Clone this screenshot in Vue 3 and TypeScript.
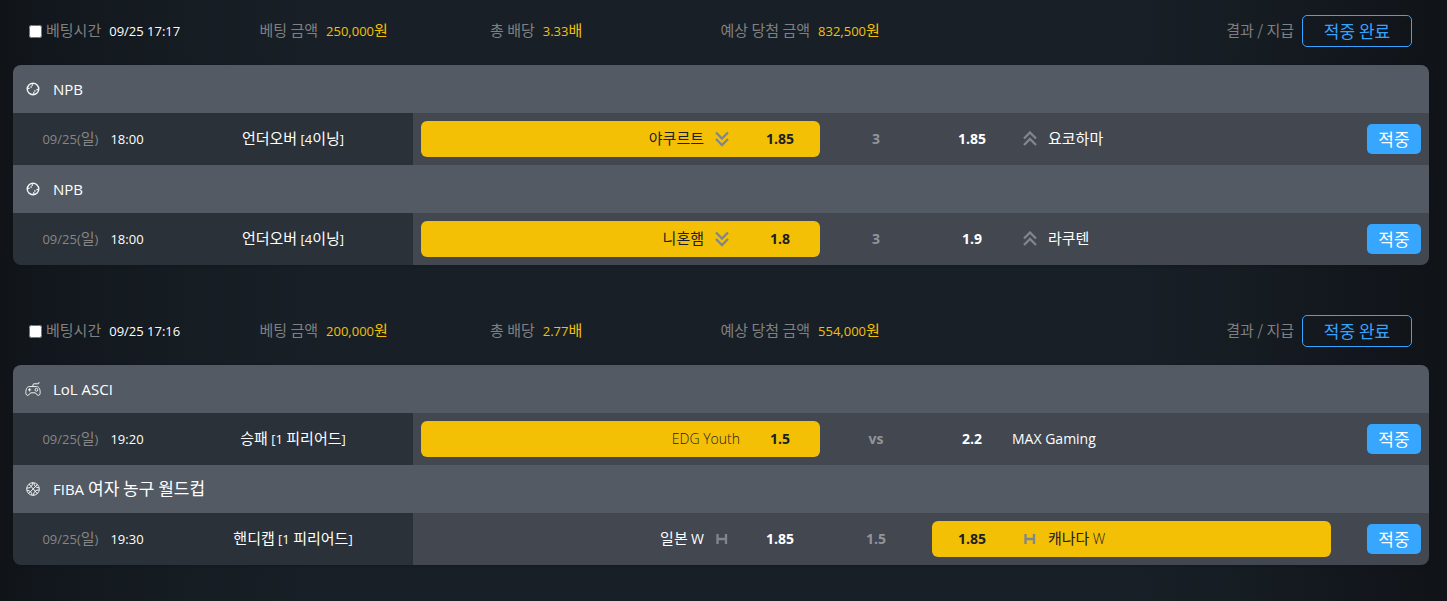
<script setup lang="ts">
import { h, type FunctionalComponent } from 'vue'

type Sport = 'baseball' | 'esports' | 'basketball'
type Mark = 'down' | 'up' | 'handicap'

interface Side {
  name: string
  odds: string
  mark?: Mark
  picked?: boolean
}

interface Match {
  sport: Sport
  league: string
  date: string
  time: string
  market: string
  home: Side
  line: string
  away: Side
  result: string
}

interface Slip {
  id: number
  placedAt: string
  stake: string
  totalOdds: string
  payout: string
  status: string
  matches: Match[]
}

const slips: Slip[] = [
  {
    id: 1,
    placedAt: '09/25 17:17',
    stake: '250,000원',
    totalOdds: '3.33배',
    payout: '832,500원',
    status: '적중 완료',
    matches: [
      {
        sport: 'baseball',
        league: 'NPB',
        date: '09/25(일)',
        time: '18:00',
        market: '언더오버 [4이닝]',
        home: { name: '야쿠르트', odds: '1.85', mark: 'down', picked: true },
        line: '3',
        away: { name: '요코하마', odds: '1.85', mark: 'up' },
        result: '적중',
      },
      {
        sport: 'baseball',
        league: 'NPB',
        date: '09/25(일)',
        time: '18:00',
        market: '언더오버 [4이닝]',
        home: { name: '니혼햄', odds: '1.8', mark: 'down', picked: true },
        line: '3',
        away: { name: '라쿠텐', odds: '1.9', mark: 'up' },
        result: '적중',
      },
    ],
  },
  {
    id: 2,
    placedAt: '09/25 17:16',
    stake: '200,000원',
    totalOdds: '2.77배',
    payout: '554,000원',
    status: '적중 완료',
    matches: [
      {
        sport: 'esports',
        league: 'LoL ASCI',
        date: '09/25(일)',
        time: '19:20',
        market: '승패 [1 피리어드]',
        home: { name: 'EDG Youth', odds: '1.5', picked: true },
        line: 'vs',
        away: { name: 'MAX Gaming', odds: '2.2' },
        result: '적중',
      },
      {
        sport: 'basketball',
        league: 'FIBA 여자 농구 월드컵',
        date: '09/25(일)',
        time: '19:30',
        market: '핸디캡 [1 피리어드]',
        home: { name: '일본 W', odds: '1.85', mark: 'handicap' },
        line: '1.5',
        away: { name: '캐나다 W', odds: '1.85', mark: 'handicap', picked: true },
        result: '적중',
      },
    ],
  },
]

// Hangul is set slightly larger than the Latin letters and digits beside it.
const Mixed: FunctionalComponent<{ text: string }> = (props) => {
  const runs = props.text.match(/[가-힣]+(?:(?: \/)? [가-힣]+)* ?|[^가-힣]+/g) ?? []
  return h(
    'span',
    { class: 'mixed' },
    runs.map((run) => (/[가-힣]/.test(run) ? h('span', { class: 'ko' }, run) : run)),
  )
}
Mixed.props = ['text']

const MarkIcon: FunctionalComponent<{ mark: Mark }> = (props) => {
  const shapes: Record<Mark, string> = {
    down: 'M1 1.5 7 7.5 13 1.5M1 8 7 14 13 8',
    up: 'M1 7.5 7 1.5 13 7.5M1 14 7 8 13 14',
    handicap: 'M2.5 3V13M11 3V13M2.5 8H11',
  }
  return h('span', { class: 'mark' }, [
    h('svg', { width: 14, height: 16, viewBox: '0 0 14 16', 'aria-hidden': 'true' }, [
      h('path', { d: shapes[props.mark], fill: 'none', stroke: 'currentColor', 'stroke-width': 2.3 }),
    ]),
  ])
}
MarkIcon.props = ['mark']
</script>

<template>
  <main class="history">
    <section v-for="slip in slips" :key="slip.id" class="slip">
      <header class="summary">
        <div class="field">
          <input :id="`slip-${slip.id}`" class="check" type="checkbox" />
          <label class="label" :for="`slip-${slip.id}`"><Mixed text="베팅시간" /></label>
          <span class="value white"><Mixed :text="slip.placedAt" /></span>
        </div>
        <div class="field">
          <span class="label"><Mixed text="베팅 금액" /></span>
          <span class="value"><Mixed :text="slip.stake" /></span>
        </div>
        <div class="field">
          <span class="label"><Mixed text="총 배당" /></span>
          <span class="value"><Mixed :text="slip.totalOdds" /></span>
        </div>
        <div class="field">
          <span class="label"><Mixed text="예상 당첨 금액" /></span>
          <span class="value"><Mixed :text="slip.payout" /></span>
        </div>
        <div class="field end">
          <span class="label"><Mixed text="결과 / 지급" /></span>
          <button type="button" class="status">{{ slip.status }}</button>
        </div>
      </header>

      <div class="card">
        <article v-for="(match, i) in slip.matches" :key="i">
          <h2 class="league">
            <svg v-if="match.sport === 'baseball'" class="sport bold" viewBox="0 0 16 16" aria-hidden="true">
              <circle cx="8" cy="8" r="5.8" />
              <path d="M7.6 3.2 7 4.8M6.6 5.6 5.6 6.6M4.6 7.1 3 7.7" />
              <path d="M8.4 12.8 9 11.2M9.4 10.4 10.4 9.4M11.4 8.9 13 8.3" />
            </svg>
            <svg v-else-if="match.sport === 'esports'" class="sport" viewBox="0 0 16 16" aria-hidden="true">
              <path d="M4.2 5.6H11.8C14 5.6 15.2 8.4 15.2 11.6C15.2 13.4 14.4 14.4 13.2 14.4C11.8 14.4 11.2 11.8 10 11.8H6C4.8 11.8 4.2 14.4 2.8 14.4C1.6 14.4.8 13.4.8 11.6C.8 8.4 2 5.6 4.2 5.6Z" />
              <path d="M8 5.4V3.8Q8 2.8 9 2.8H13Q14 2.8 14 1.6V1" />
              <path d="M3 8.8H6.2M4.6 7.2V10.4" />
              <circle cx="11.4" cy="8.8" r="1.4" />
            </svg>
            <svg v-else class="sport" viewBox="0 0 16 16" aria-hidden="true">
              <circle cx="8" cy="8" r="6.3" />
              <path d="M4 3 12.4 12.8M12.6 3.4 3.6 12.6M1.8 7C5 7.4 7.6 5.2 7.6 1.6M8.6 14.4C8.4 11 11 8.6 14.3 9M9 1.8C8.8 4.6 10.8 6.8 14 6.8M2 9.4C5 9.4 7 11.4 7 14.2" />
            </svg>
            <Mixed :text="match.league" />
          </h2>

          <div class="match">
            <div class="info">
              <div class="when">
                <span class="date"><Mixed :text="match.date" /></span>
                <time><Mixed :text="match.time" /></time>
              </div>
              <div class="market"><Mixed :text="match.market" /></div>
            </div>
            <div class="board">
              <div class="side home" :class="{ picked: match.home.picked }">
                <span class="team"><Mixed :text="match.home.name" /></span>
                <MarkIcon v-if="match.home.mark" :mark="match.home.mark" />
                <strong class="odds">{{ match.home.odds }}</strong>
              </div>
              <strong class="line">{{ match.line }}</strong>
              <div class="side away" :class="{ picked: match.away.picked }">
                <strong class="odds">{{ match.away.odds }}</strong>
                <MarkIcon v-if="match.away.mark" :mark="match.away.mark" />
                <span class="team"><Mixed :text="match.away.name" /></span>
              </div>
              <div class="outcome">
                <button type="button" class="hit">{{ match.result }}</button>
              </div>
            </div>
          </div>
        </article>
      </div>
    </section>
  </main>
</template>

<style>
body {
  margin: 0;
  background: #181f26;
}
</style>

<style scoped>
.history {
  --hangul: 15px;
  min-height: 100vh;
  box-sizing: border-box;
  padding: 0 18px 1px 13px;
  background: linear-gradient(90deg, #101418 0, #12171d 40px, #151c22 180px, #181f26 320px, #181f26 calc(100% - 320px), #151c22 calc(100% - 200px), #12161c calc(100% - 70px), #101418 100%);
  color: #fff;
  font-family: "Open Sans", "Noto Sans CJK KR", sans-serif;
  font-size: 13px;
  line-height: 20px;
}

.slip {
  padding: 15px 0 35px;
}

.slip:last-child {
  padding-bottom: 0;
}

.history :deep(.mixed) {
  white-space: pre;
}

.history :deep(.ko) {
  font-family: "Noto Sans CJK KR", sans-serif;
  font-size: var(--hangul);
  line-height: 1;
}

.summary {
  display: grid;
  grid-template-columns: repeat(4, minmax(0, 1fr)) minmax(0, 2fr);
  align-items: center;
  margin-bottom: 18px;
  padding: 0 17px 0 16px;
}

.field {
  display: flex;
  align-items: center;
  gap: 8px;
  white-space: nowrap;
}

.field.end {
  justify-content: flex-end;
}

.check {
  width: 13px;
  height: 13px;
  margin: 0 -4px 0 0;
}

.label {
  color: #808080;
}

.value {
  color: #f3c006;
}

.value.white {
  color: #fff;
}

.status,
.hit {
  box-sizing: border-box;
  font-family: "Noto Sans CJK KR", sans-serif;
  font-size: 17px;
  line-height: 20px;
  border-radius: 5px;
  cursor: pointer;
}

.status {
  min-width: 110px;
  height: 32px;
  padding: 0 20px;
  border: 1px solid #36a3ff;
  background: transparent;
  color: #36a3ff;
}

.hit {
  min-width: 54px;
  height: 30px;
  padding: 0 10px;
  border: 0;
  background: #36a6ff;
  color: #fff;
}

.card {
  overflow: hidden;
  border-radius: 8px;
  box-shadow: 0 1px 3px rgba(16, 18, 32, 0.35);
}

.league {
  --hangul: 17px;
  display: flex;
  align-items: center;
  gap: 12px;
  height: 48px;
  margin: 0;
  padding: 0 12px;
  background: #535a63;
  font-size: 15px;
  font-weight: 400;
}

.sport {
  width: 16px;
  height: 16px;
  fill: none;
  stroke: #f2f3f5;
  stroke-width: 1;
}

.sport.bold {
  stroke-width: 1.4;
}

.match {
  display: flex;
  height: 52px;
}

.info {
  display: grid;
  grid-template-columns: 2fr 3fr;
  flex: 0 0 400px;
  align-items: center;
  background: #2b3138;
  text-align: center;
}

.when {
  display: flex;
  align-items: center;
  justify-content: center;
  gap: 12px;
}

.date {
  color: #868686;
}

.board {
  display: grid;
  grid-template-columns: minmax(0, 1fr) 112px minmax(0, 1fr) 90px;
  flex: 1;
  align-items: center;
  padding: 0 8px;
  background: #424750;
}

.side {
  display: flex;
  align-items: center;
  height: 36px;
  border-radius: 6px;
  font-size: 14px;
}

.home {
  justify-content: flex-end;
}

.picked {
  background: #f3c006;
  color: #1b2026;
  font-weight: 300;
}

.picked :deep(.ko) {
  font-weight: 400;
}

.odds {
  width: 80px;
  font-weight: 700;
  text-align: center;
}

.history :deep(.mark) {
  display: flex;
  justify-content: center;
  width: 36px;
  color: #80868f;
}

.line {
  color: #91959b;
  font-size: 14px;
  font-weight: 700;
  text-align: center;
}

.outcome {
  display: flex;
  justify-content: flex-end;
}
</style>
